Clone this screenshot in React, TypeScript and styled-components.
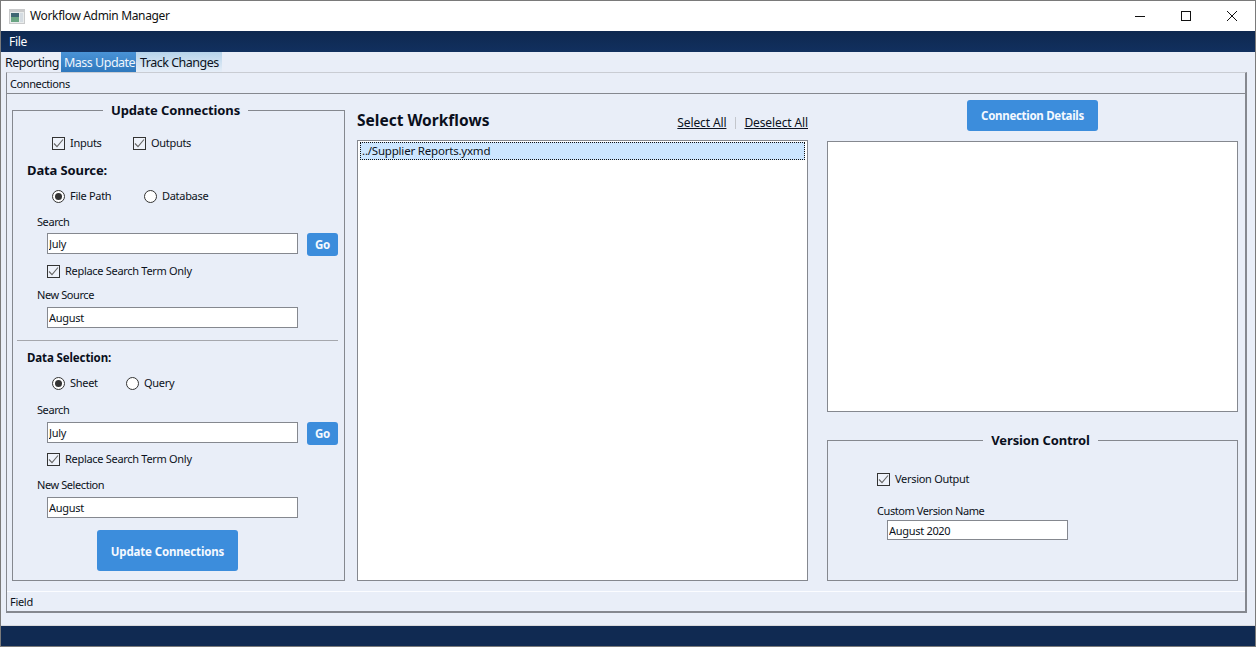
import React from "react";
import styled, { createGlobalStyle } from "styled-components";

const Global = createGlobalStyle`
  html, body { margin: 0; padding: 0; height: 100%; background: #fff; overflow: hidden; }
  #root { height: 100%; }
  * { box-sizing: border-box; }
`;
const FONT = `"Noto Sans", "Open Sans", "Liberation Sans", sans-serif`;
const INK = "#0c1220";
const LINE = "#85888f";

const Win = styled.div`
  width: 1256px; height: 647px; display: flex; flex-direction: column;
  border: 1px solid #7a7a7a; background: #e9eef8; font: 11px/16px ${FONT}; color: ${INK}; letter-spacing: -0.3px;
`;
const TitleBar = styled.header`
  height: 30px; flex: none; background: #fff; display: flex; align-items: center; padding-left: 8px;
`;
const AppTitle = styled.span`
  margin-left: 5px; font-size: 12px; flex: 1; color: #111; letter-spacing: -0.34px;
`;
const WinButton = styled.button`
  width: 46px; height: 30px; border: 0; background: none; padding: 0; display: flex;
  align-items: center; justify-content: center;
`;
const MenuBar = styled.nav`
  height: 21px; flex: none; background: linear-gradient(#0e284f, #11305f); color: #fff;
  padding-left: 8px; font-size: 12px; line-height: 21px;
`;
const Tabs = styled.div`
  height: 20px; flex: none; display: flex; font-size: 12.5px; line-height: 21px; white-space: nowrap; letter-spacing: -0.5px;
`;
const Tab = styled.div<{ $w: number; $v?: "active" | "soft" }>`
  width: ${(p) => p.$w}px; padding-left: ${(p) => (p.$v === "active" ? 3 : 4)}px;
  color: ${(p) => (p.$v === "active" ? "#eef5fc" : INK)};
  background: ${(p) =>
    p.$v === "active" ? "linear-gradient(#4a93d6, #2f78bd)" : p.$v === "soft" ? "linear-gradient(#b6d3ea, #e6eef8)" : "none"};
`;
const TabPanel = styled.section`
  width: 1241px; height: 541px; margin-left: 5px; flex: none; display: flex; flex-direction: column;
  border: 1px solid ${LINE}; border-top-color: #c9ccd3; border-right-width: 2px; border-bottom-width: 2px;
`;
const PanelHead = styled.div`
  height: 21px; flex: none; border-bottom: 1px solid ${LINE}; padding-left: 3px; line-height: 21px; letter-spacing: -0.4px;
`;
const PanelBody = styled.div`
  flex: 1; display: flex; border-right: 1px solid ${LINE}; width: 1240px;
`;
const PanelFoot = styled.div`
  height: 20px; flex: none; border-top: 1px solid #fbfcff; padding-left: 3px; line-height: 20px;
`;
const Gutter = styled.div`
  height: 13px; flex: none; border-bottom: 1px solid #d8d9dc;
`;
const BottomBar = styled.footer`
  flex: 1; background: #102a52;
`;

const LeftColumn = styled.div`
  width: 345px; padding: 16px 0 0 5px; flex: none;
`;
const GroupBox = styled.div`
  position: relative; border: 1px solid ${LINE}; padding-top: 24px;
`;
const GroupLeft = styled(GroupBox)`
  width: 333px; height: 471px;
`;
const GroupTitle = styled.div<{ $shift?: number; $back?: number }>`
  position: absolute; top: -9px; left: 0; right: 0; text-align: center; line-height: 17px; pointer-events: none;
  padding-left: ${(p) => p.$shift ?? 0}px; padding-right: ${(p) => p.$back ?? 0}px; letter-spacing: -0.12px;
  & > span { background: #e9eef8; padding: 0 8px; font-size: 13px; font-weight: 700; color: #0a0f1c; }
`;
const Row = styled.div<{ $h: number; $pl?: number; $mt?: number }>`
  height: ${(p) => p.$h}px; display: flex; align-items: center; padding-left: ${(p) => p.$pl ?? 0}px;
  margin-top: ${(p) => p.$mt ?? 0}px; flex: none;
`;
const Heading = styled.div<{ $h: number; $size: number; $mt: number }>`
  height: ${(p) => p.$h}px; margin-top: ${(p) => p.$mt}px; padding-left: 14px; font-weight: 700; font-size: ${(p) => p.$size}px;
  line-height: ${(p) => p.$h}px; color: #0a0f1c; letter-spacing: -0.12px;
`;
const FieldLabel = styled.div<{ $mt: number; $pl?: number }>`
  height: 16px; line-height: 16px; margin-top: ${(p) => p.$mt}px; padding-left: ${(p) => p.$pl ?? 24}px; letter-spacing: -0.42px;
`;
const Field = styled.input<{ $w?: number; $h?: number }>`
  width: ${(p) => p.$w ?? 251}px; height: ${(p) => p.$h ?? 21}px; border: 1px solid ${LINE}; background: #fff;
  font: 11px/16px ${FONT}; letter-spacing: -0.3px; color: ${INK}; padding: 0 1px; margin: 0; outline: none; border-radius: 0;
`;
const Blue = styled.button`
  background: #3c8ddc; color: #f4f9ff; border: 0; font-family: ${FONT}; font-weight: 700; padding: 0; border-radius: 3px; letter-spacing: -0.15px;
`;
const GoButton = styled(Blue)`
  width: 31px; height: 23px; font-size: 11.5px; margin-left: 9px;
`;
const UpdateButton = styled(Blue)`
  display: block; width: 141px; height: 41px; font-size: 11.5px; padding-top: 1px; margin: 10px 0 0 84px;
`;
const DetailsButton = styled(Blue)`
  width: 131px; height: 31px; font-size: 11.5px; letter-spacing: -0.3px;
`;
const Divider = styled.hr`
  height: 1px; border: 0; background: #a5a7ad; margin: 10px 6px 0 4px;
`;
const FieldRow = styled.div<{ $mt: number; $pl?: number }>`
  height: 23px; padding-left: ${(p) => p.$pl ?? 34}px; margin-top: ${(p) => p.$mt}px; display: flex; align-items: flex-start;
`;
const Opt = styled.label<{ $w?: number }>`
  display: flex; align-items: center; gap: 5px; width: ${(p) => (p.$w ? `${p.$w}px` : "auto")};
`;
const BoxMark = styled.span`
  width: 13px; height: 13px; border: 1px solid #333; background: #eef2fa; display: flex; flex: none;
`;
const RadioMark = styled.span<{ $on?: boolean }>`
  width: 13px; height: 13px; border-radius: 50%; border: 1px solid #333; background: #fff; flex: none;
  display: flex; align-items: center; justify-content: center;
  &::after { content: ""; width: 7px; height: 7px; border-radius: 50%; background: ${(p) => (p.$on ? "#333" : "transparent")}; }
`;
const MiddleColumn = styled.div`
  width: 451px; padding-top: 14px; flex: none; margin-left: 5px; display: flex; flex-direction: column;
`;
const ListHead = styled.div`
  height: 32px; display: flex; align-items: flex-start; justify-content: space-between;
`;
const ListTitle = styled.h2`
  margin: 0; font: 700 15.5px/24px ${FONT}; color: #0a0f1c; letter-spacing: 0;
`;
const Links = styled.div`
  display: flex; align-items: center; padding-top: 7px; font-size: 12px; line-height: 16px; letter-spacing: -0.12px;
`;
const LinkText = styled.a`
  text-decoration: underline; color: ${INK};
`;
const LinkSep = styled.span`
  width: 1px; height: 12px; background: #c3c6cc; margin: 0 8px 0 9px;
`;
const ListBox = styled.div`
  width: 451px; height: 441px; background: #fff; border: 1px solid ${LINE}; padding: 1px 2px;
`;
const ListItem = styled.div`
  height: 18px; background: #cce6ff; border: 1px dotted #111; line-height: 16px; padding-left: 1px; font-size: 11.5px; letter-spacing: -0.2px;
`;
const RightColumn = styled.div`
  width: 411px; margin-left: 19px; padding-top: 6px; flex: none; display: flex; flex-direction: column; align-items: center;
`;
const Details = styled.div`
  width: 411px; height: 271px; margin-top: 10px; background: #fff; border: 1px solid ${LINE};
`;
const GroupRight = styled(GroupBox)`
  width: 411px; height: 141px; margin-top: 28px; padding-top: 30px;
`;

const Check = () => (
  <BoxMark>
    <svg width="11" height="11" viewBox="0 0 11 11" fill="none">
      <path d="M1 5.5 L4 8.7 L10 1.5" stroke="#666" strokeWidth="1.1" />
    </svg>
  </BoxMark>
);

export default function App() {
  return (
    <Win>
      <Global />
      <TitleBar>
        <svg width="16" height="15" viewBox="0 0 16 15">
          <rect x="0" y="0" width="16" height="15" fill="#c9cacb" />
          <rect x="1" y="3" width="14" height="11" fill="#e9ecec" />
          <rect x="2" y="4" width="8" height="4" fill="#3e6673" />
          <rect x="2" y="8" width="8" height="5" fill="#6aa583" />
          <rect x="11" y="4" width="3" height="9" fill="#d5dce2" />
        </svg>
        <AppTitle>Workflow Admin Manager</AppTitle>
        <WinButton aria-label="Minimize">
          <svg width="12" height="12"><path d="M1 6.5H11" stroke="#111" /></svg>
        </WinButton>
        <WinButton aria-label="Maximize">
          <svg width="12" height="12"><rect x="1.5" y="1.5" width="9" height="9" fill="none" stroke="#111" /></svg>
        </WinButton>
        <WinButton aria-label="Close">
          <svg width="12" height="12"><path d="M1 1L11 11M11 1L1 11" stroke="#111" /></svg>
        </WinButton>
      </TitleBar>
      <MenuBar>File</MenuBar>
      <Tabs>
        <Tab $w={60}>Reporting</Tab>
        <Tab $w={75} $v="active">Mass Update</Tab>
        <Tab $w={86} $v="soft">Track Changes</Tab>
      </Tabs>
      <TabPanel>
        <PanelHead>Connections</PanelHead>
        <PanelBody>
          <LeftColumn>
            <GroupLeft>
              <GroupTitle $back={6}><span>Update Connections</span></GroupTitle>
              <Row $h={16} $pl={39}>
                <Opt $w={81}><Check />Inputs</Opt>
                <Opt><Check />Outputs</Opt>
              </Row>
              <Heading $h={18} $size={13} $mt={10}>Data Source:</Heading>
              <Row $h={16} $pl={39} $mt={9}>
                <Opt $w={92}><RadioMark $on />File Path</Opt>
                <Opt><RadioMark />Database</Opt>
              </Row>
              <FieldLabel $mt={10}>Search</FieldLabel>
              <FieldRow $mt={3}><Field defaultValue="July" /><GoButton>Go</GoButton></FieldRow>
              <Row $h={16} $pl={34} $mt={7}><Opt><Check />Replace Search Term Only</Opt></Row>
              <FieldLabel $mt={8}>New Source</FieldLabel>
              <FieldRow $mt={4}><Field defaultValue="August" /></FieldRow>
              <Divider />
              <Heading $h={16} $size={11.5} $mt={9}>Data Selection:</Heading>
              <Row $h={16} $pl={39} $mt={9}>
                <Opt $w={74}><RadioMark $on />Sheet</Opt>
                <Opt><RadioMark />Query</Opt>
              </Row>
              <FieldLabel $mt={11}>Search</FieldLabel>
              <FieldRow $mt={4}><Field defaultValue="July" /><GoButton>Go</GoButton></FieldRow>
              <Row $h={16} $pl={34} $mt={6}><Opt><Check />Replace Search Term Only</Opt></Row>
              <FieldLabel $mt={10}>New Selection</FieldLabel>
              <FieldRow $mt={4}><Field defaultValue="August" /></FieldRow>
              <UpdateButton>Update Connections</UpdateButton>
            </GroupLeft>
          </LeftColumn>
          <MiddleColumn>
            <ListHead>
              <ListTitle>Select Workflows</ListTitle>
              <Links>
                <LinkText>Select All</LinkText>
                <LinkSep />
                <LinkText>Deselect All</LinkText>
              </Links>
            </ListHead>
            <ListBox><ListItem>../Supplier Reports.yxmd</ListItem></ListBox>
          </MiddleColumn>
          <RightColumn>
            <DetailsButton>Connection Details</DetailsButton>
            <Details />
            <GroupRight>
              <GroupTitle $shift={16}><span>Version Control</span></GroupTitle>
              <Row $h={16} $pl={49}><Opt><Check />Version Output</Opt></Row>
              <FieldLabel $mt={16} $pl={49}>Custom Version Name</FieldLabel>
              <FieldRow $pl={59} $mt={1}><Field $w={181} $h={20} defaultValue="August 2020" /></FieldRow>
            </GroupRight>
          </RightColumn>
        </PanelBody>
        <PanelFoot>Field</PanelFoot>
      </TabPanel>
      <Gutter />
      <BottomBar />
    </Win>
  );
}
